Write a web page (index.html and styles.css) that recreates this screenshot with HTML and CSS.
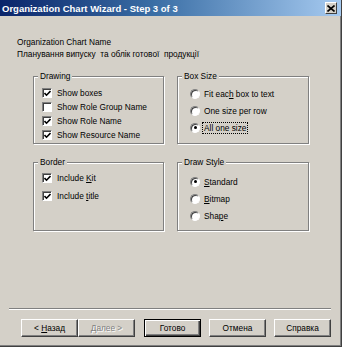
FILE: index.html
```html
<!DOCTYPE html>
<html>
<head>
<meta charset="utf-8">
<link rel="stylesheet" href="styles.css">
</head>
<body>
<div class="window">
  <div class="titlebar">
    <span class="title">Organization Chart Wizard - Step 3 of 3</span>
    <span class="close"><svg width="8" height="7" viewBox="0 0 8 7"><path d="M0.5 0.5 L7.5 6.5 M7.5 0.5 L0.5 6.5" stroke="#000" stroke-width="1.6"/></svg></span>
  </div>
  <div class="content">
    <div class="name-label">Organization Chart Name</div>
    <div class="name-value">Планування випуску  та облік готової  продукції</div>
    <div class="groups">
      <div class="group g-drawing">
        <span class="legend">Drawing</span>
        <div class="row chk"><span class="cb on"><svg width="7" height="7" viewBox="0 0 7 7"><path d="M0.5 3 L2.5 5.2 L6.5 1" fill="none" stroke="#000" stroke-width="1.6"/></svg></span><span class="lbl">Show boxes</span></div>
        <div class="row chk"><span class="cb"></span><span class="lbl">Show Role Group Name</span></div>
        <div class="row chk"><span class="cb on"><svg width="7" height="7" viewBox="0 0 7 7"><path d="M0.5 3 L2.5 5.2 L6.5 1" fill="none" stroke="#000" stroke-width="1.6"/></svg></span><span class="lbl">Show Role Name</span></div>
        <div class="row chk"><span class="cb on"><svg width="7" height="7" viewBox="0 0 7 7"><path d="M0.5 3 L2.5 5.2 L6.5 1" fill="none" stroke="#000" stroke-width="1.6"/></svg></span><span class="lbl">Show Resource Name</span></div>
      </div>
      <div class="group g-boxsize">
        <span class="legend">Box Size</span>
        <div class="row rad"><span class="rb"></span><span class="lbl">Fit eac<u>h</u> box to text</span></div>
        <div class="row rad"><span class="rb"></span><span class="lbl">One size per row</span></div>
        <div class="row rad"><span class="rb on"></span><span class="lbl focus">All one size</span></div>
      </div>
      <div class="group g-border">
        <span class="legend">Border</span>
        <div class="row chk"><span class="cb on"><svg width="7" height="7" viewBox="0 0 7 7"><path d="M0.5 3 L2.5 5.2 L6.5 1" fill="none" stroke="#000" stroke-width="1.6"/></svg></span><span class="lbl">Include <u>K</u>it</span></div>
        <div class="row chk"><span class="cb on"><svg width="7" height="7" viewBox="0 0 7 7"><path d="M0.5 3 L2.5 5.2 L6.5 1" fill="none" stroke="#000" stroke-width="1.6"/></svg></span><span class="lbl">Include <u>t</u>itle</span></div>
      </div>
      <div class="group g-style">
        <span class="legend">Draw Style</span>
        <div class="row rad"><span class="rb on"></span><span class="lbl"><u>S</u>tandard</span></div>
        <div class="row rad"><span class="rb"></span><span class="lbl"><u>B</u>itmap</span></div>
        <div class="row rad"><span class="rb"></span><span class="lbl">Sha<u>p</u>e</span></div>
      </div>
    </div>
    <div class="separator"></div>
    <div class="buttons">
      <div class="btn"><span class="lbl">&lt; <u>Н</u>азад</span></div>
      <div class="btn disabled"><span class="lbl">Далее &gt;</span></div>
      <div class="btn default"><span class="lbl">Готово</span></div>
      <div class="btn"><span class="lbl">Отмена</span></div>
      <div class="btn"><span class="lbl">Справка</span></div>
    </div>
  </div>
</div>
</body>
</html>
```
FILE: styles.css
```css
* { box-sizing: border-box; }
html, body { margin: 0; padding: 0; }
body {
  width: 342px;
  height: 347px;
  overflow: hidden;
  background: #d4d0c8;
  font-family: "Liberation Sans", Arial, sans-serif;
  font-size: 8.3px;
  color: #000;
}
.window {
  width: 342px;
  height: 347px;
  background: #d4d0c8;
  border-right: 1px solid #404040;
  border-bottom: 1px solid #404040;
  box-shadow: inset -1px -1px 0 #808080;
  display: flex;
  flex-direction: column;
}
.titlebar {
  height: 16px;
  background: linear-gradient(to right, #0a246a 0%, #3a6ea5 45%, #a6caf0 100%);
  display: flex;
  align-items: center;
  justify-content: space-between;
  padding: 0 4px 0 2px;
}
.title {
  color: #fff;
  font-weight: bold;
  font-size: 9.5px;
  white-space: nowrap;
}
.close {
  width: 12px;
  height: 12px;
  background: #d4d0c8;
  border-top: 1px solid #fff;
  border-left: 1px solid #fff;
  border-right: 1px solid #404040;
  border-bottom: 1px solid #404040;
  display: flex;
  align-items: center;
  justify-content: center;
}
.content {
  flex: 1;
  display: flex;
  flex-direction: column;
  padding: 20px 0 0 0;
}
.name-label, .name-value {
  line-height: 12px;
  height: 12px;
  padding-left: 17px;
  white-space: pre;
}
.groups {
  margin: 16px 0 0 33px;
  display: grid;
  grid-template-columns: 131px 132px;
  grid-template-rows: 68px 69px;
  column-gap: 13px;
  row-gap: 18px;
}
.group {
  position: relative;
  border: 1px solid #808080;
  box-shadow: 1px 1px 0 #fff, inset 1px 1px 0 #fff;
  display: flex;
  flex-direction: column;
}
.legend {
  position: absolute;
  top: -6px;
  left: 4px;
  padding: 0 2px;
  background: #d4d0c8;
  line-height: 11px;
}
.g-drawing { padding: 9px 0 0 8px; }
.g-drawing .row { height: 14px; }
.g-boxsize { padding: 8px 0 0 12px; }
.g-boxsize .row { height: 17px; }
.g-border { padding: 6px 0 0 8px; }
.g-border .row { height: 18px; }
.g-style { padding: 10px 0 0 12px; }
.g-style .row { height: 17px; }
.row {
  display: flex;
  align-items: center;
  white-space: nowrap;
}
.lbl { white-space: pre; }
.cb {
  width: 10px;
  height: 10px;
  background: #fff;
  border-top: 1px solid #808080;
  border-left: 1px solid #808080;
  border-right: 1px solid #fff;
  border-bottom: 1px solid #fff;
  box-shadow: inset 1px 1px 0 #404040;
  margin-right: 5px;
  display: flex;
  align-items: center;
  justify-content: center;
  padding: 1px 0 0 1px;
}
.rb {
  width: 10px;
  height: 10px;
  border-radius: 50%;
  background: #fff;
  border-top: 1px solid #808080;
  border-left: 1px solid #808080;
  border-right: 1px solid #fff;
  border-bottom: 1px solid #fff;
  box-shadow: inset 1px 1px 0 #404040;
  margin-right: 4px;
  display: flex;
  align-items: center;
  justify-content: center;
}
.rb.on::after {
  content: "";
  width: 3px;
  height: 3px;
  border-radius: 50%;
  background: #000;
}
.focus {
  outline: 1px dotted #000;
  outline-offset: 0;
  padding: 0 1px;
  margin-left: -1px;
}
u { text-decoration: underline; text-underline-offset: 1px; }
.separator {
  margin: 77px 10px 0 9px;
  height: 2px;
  border-top: 1px solid #808080;
  border-bottom: 1px solid #fff;
}
.buttons {
  margin: 9px 0 0 21px;
  display: flex;
}
.btn {
  width: 57px;
  height: 18px;
  display: flex;
  align-items: center;
  justify-content: center;
  background: #d4d0c8;
  border-top: 1px solid #fff;
  border-left: 1px solid #fff;
  border-right: 1px solid #404040;
  border-bottom: 1px solid #404040;
  box-shadow: inset -1px -1px 0 #808080;
  white-space: nowrap;
}
.btn.disabled {
  color: #808080;
  text-shadow: 1px 1px 0 #fff;
}
.btn.default {
  margin-left: 9px;
  border: 1px solid #000;
  box-shadow: inset 1px 1px 0 #fff, inset -1px -1px 0 #404040, inset -2px -2px 0 #808080;
}
.btn.default ~ .btn { margin-left: 8px; }
```
